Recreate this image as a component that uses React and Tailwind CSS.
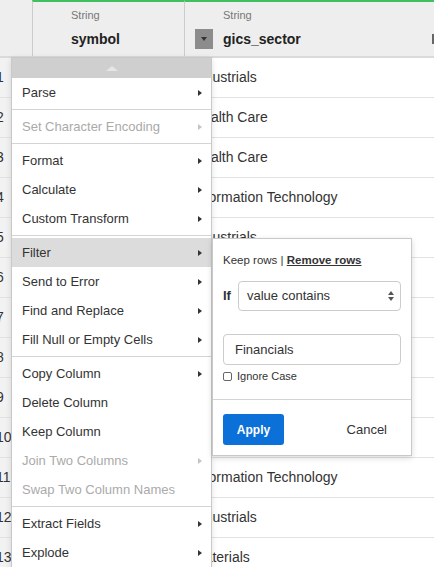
import React from "react";

const rows = [
  ["1", "Industrials"],
  ["2", "Health Care"],
  ["3", "Health Care"],
  ["4", "Information Technology"],
  ["5", "Industrials"],
  ["6", "Consumer Discretionary"],
  ["7", "Utilities"],
  ["8", "Health Care"],
  ["9", "Financials"],
  ["10", "Information Technology"],
  ["11", "Information Technology"],
  ["12", "Industrials"],
  ["13", "Materials"],
];

const menu = [
  { t: "Parse", a: true },
  "sep",
  { t: "Set Character Encoding", a: true, d: true },
  "sep",
  { t: "Format", a: true },
  { t: "Calculate", a: true },
  { t: "Custom Transform", a: true },
  "sep",
  { t: "Filter", a: true, h: true },
  { t: "Send to Error", a: true },
  { t: "Find and Replace", a: true },
  { t: "Fill Null or Empty Cells", a: true },
  "sep",
  { t: "Copy Column", a: true },
  { t: "Delete Column" },
  { t: "Keep Column" },
  { t: "Join Two Columns", a: true, d: true },
  { t: "Swap Two Column Names", d: true },
  "sep",
  { t: "Extract Fields", a: true },
  { t: "Explode", a: true },
];

function Arrow({ disabled }) {
  return (
    <span
      className={
        "block w-0 h-0 border-y-[3.5px] border-y-transparent border-l-[4px] " +
        (disabled ? "border-l-[#c4c4c4]" : "border-l-[#333]")
      }
    />
  );
}

export default function App() {
  return (
    <div
      className="relative w-[434px] h-[567px] overflow-hidden bg-white text-[#333]"
      style={{ fontFamily: '"Liberation Sans", Arial, sans-serif' }}
    >
      {/* header */}
      <div className="flex h-[58px] bg-[#eeeeee] border-b-2 border-[#dadada]">
        <div className="w-[32px] shrink-0" />
        <div className="w-[152px] shrink-0 border-l border-l-[#cccccc] border-t-2 border-t-[#3fbf60] pl-[10px] pt-[7px]">
          <div className="pl-[28px] text-[11px] leading-[13px] text-[#777]">String</div>
          <div className="mt-[7px] flex items-center h-[20px]">
            <span className="w-[18px] h-[20px]" />
            <span className="ml-[10px] text-[14px] font-bold text-[#222]">symbol</span>
          </div>
        </div>
        <div className="flex-1 relative border-l border-l-[#cccccc] border-t-2 border-t-[#3fbf60] pl-[10px] pt-[7px]">
          <div className="pl-[28px] text-[11px] leading-[13px] text-[#777]">String</div>
          <div className="mt-[7px] flex items-center h-[20px]">
            <span className="w-[18px] h-[20px] bg-[#8c8c8c] flex items-center justify-center">
              <span className="block w-0 h-0 border-x-[3px] border-x-transparent border-t-[4px] border-t-[#333]" />
            </span>
            <span className="ml-[10px] text-[14px] font-bold text-[#222]">gics_sector</span>
          </div>
          <span className="absolute right-0 top-[32px] w-[2px] h-[10px] bg-[#666]" />
        </div>
      </div>

      {/* rows */}
      {rows.map(([n, g]) => (
        <div key={n} className="flex h-[40px] border-b border-[#e2e2e2] text-[14px]">
          <div className="w-[32px] shrink-0 bg-[#f2f2f2] flex items-center">
            <span className="ml-[-4px]">{n}</span>
          </div>
          <div className="w-[152px] shrink-0" />
          <div className="flex-1 flex items-center pl-[9px] whitespace-nowrap">{g}</div>
        </div>
      ))}

      {/* context menu */}
      <div className="absolute left-[11px] top-[57px] w-[201px] bg-white border border-[#c8c8c8] shadow-[0_2px_6px_rgba(0,0,0,0.12)]">
        <div className="h-[20px] bg-[#cfcfcf] flex items-center justify-center">
          <span className="block w-0 h-0 border-x-[6px] border-x-transparent border-b-[5px] border-b-[#e6e6e6]" />
        </div>
        {menu.map((m, i) =>
          m === "sep" ? (
            <div key={i} className="h-[5px] flex items-center">
              <div className="w-full h-px bg-[#d4d4d4]" />
            </div>
          ) : (
            <div
              key={i}
              className={
                "h-[29px] flex items-center justify-between pl-[10px] pr-[9px] text-[13px] whitespace-nowrap " +
                (m.h ? "bg-[#dcdcdc] " : "") +
                (m.d ? "text-[#aaaaaa]" : "text-[#333]")
              }
            >
              <span>{m.t}</span>
              {m.a && <Arrow disabled={m.d} />}
            </div>
          )
        )}
      </div>

      {/* filter submenu */}
      <div className="absolute left-[212px] top-[238px] w-[200px] h-[218px] bg-white border border-[#c8c8c8] shadow-[0_2px_6px_rgba(0,0,0,0.15)] flex flex-col">
        <div className="px-[10px] pt-[14px] pb-[16px] border-b border-[#d4d4d4]">
          <div className="text-[11.5px] leading-[14px] whitespace-nowrap text-[#333]">
            Keep rows | <span className="font-bold underline">Remove rows</span>
          </div>
          <div className="mt-[14px] flex items-center">
            <span className="w-[15px] text-[13px] font-bold text-[#333]">If</span>
            <div className="w-[163px] h-[30px] border border-[#cccccc] rounded-[4px] flex items-center justify-between pl-[8px] pr-[6px] text-[13px]">
              <span>value contains</span>
              <span className="flex flex-col gap-[2px]">
                <span className="block w-0 h-0 border-x-[3px] border-x-transparent border-b-[4px] border-b-[#555]" />
                <span className="block w-0 h-0 border-x-[3px] border-x-transparent border-t-[4px] border-t-[#555]" />
              </span>
            </div>
          </div>
          <div className="mt-[23px] w-[178px] h-[31px] border border-[#cccccc] rounded-[4px] flex items-center pl-[11px] text-[13px]">
            Financials
          </div>
          <div className="mt-[4px] flex items-center h-[14px]">
            <span className="w-[9px] h-[9px] border border-[#666] rounded-[2px] bg-white" />
            <span className="ml-[5px] text-[11px] text-[#333]">Ignore Case</span>
          </div>
        </div>
        <div className="flex items-center justify-between pl-[10px] pr-[24px] pt-[14px]">
          <div className="w-[61px] h-[31px] rounded-[3px] bg-[#0b70d8] text-white text-[12px] font-bold flex items-center justify-center">
            Apply
          </div>
          <span className="text-[13px] text-[#333]">Cancel</span>
        </div>
      </div>
    </div>
  );
}
